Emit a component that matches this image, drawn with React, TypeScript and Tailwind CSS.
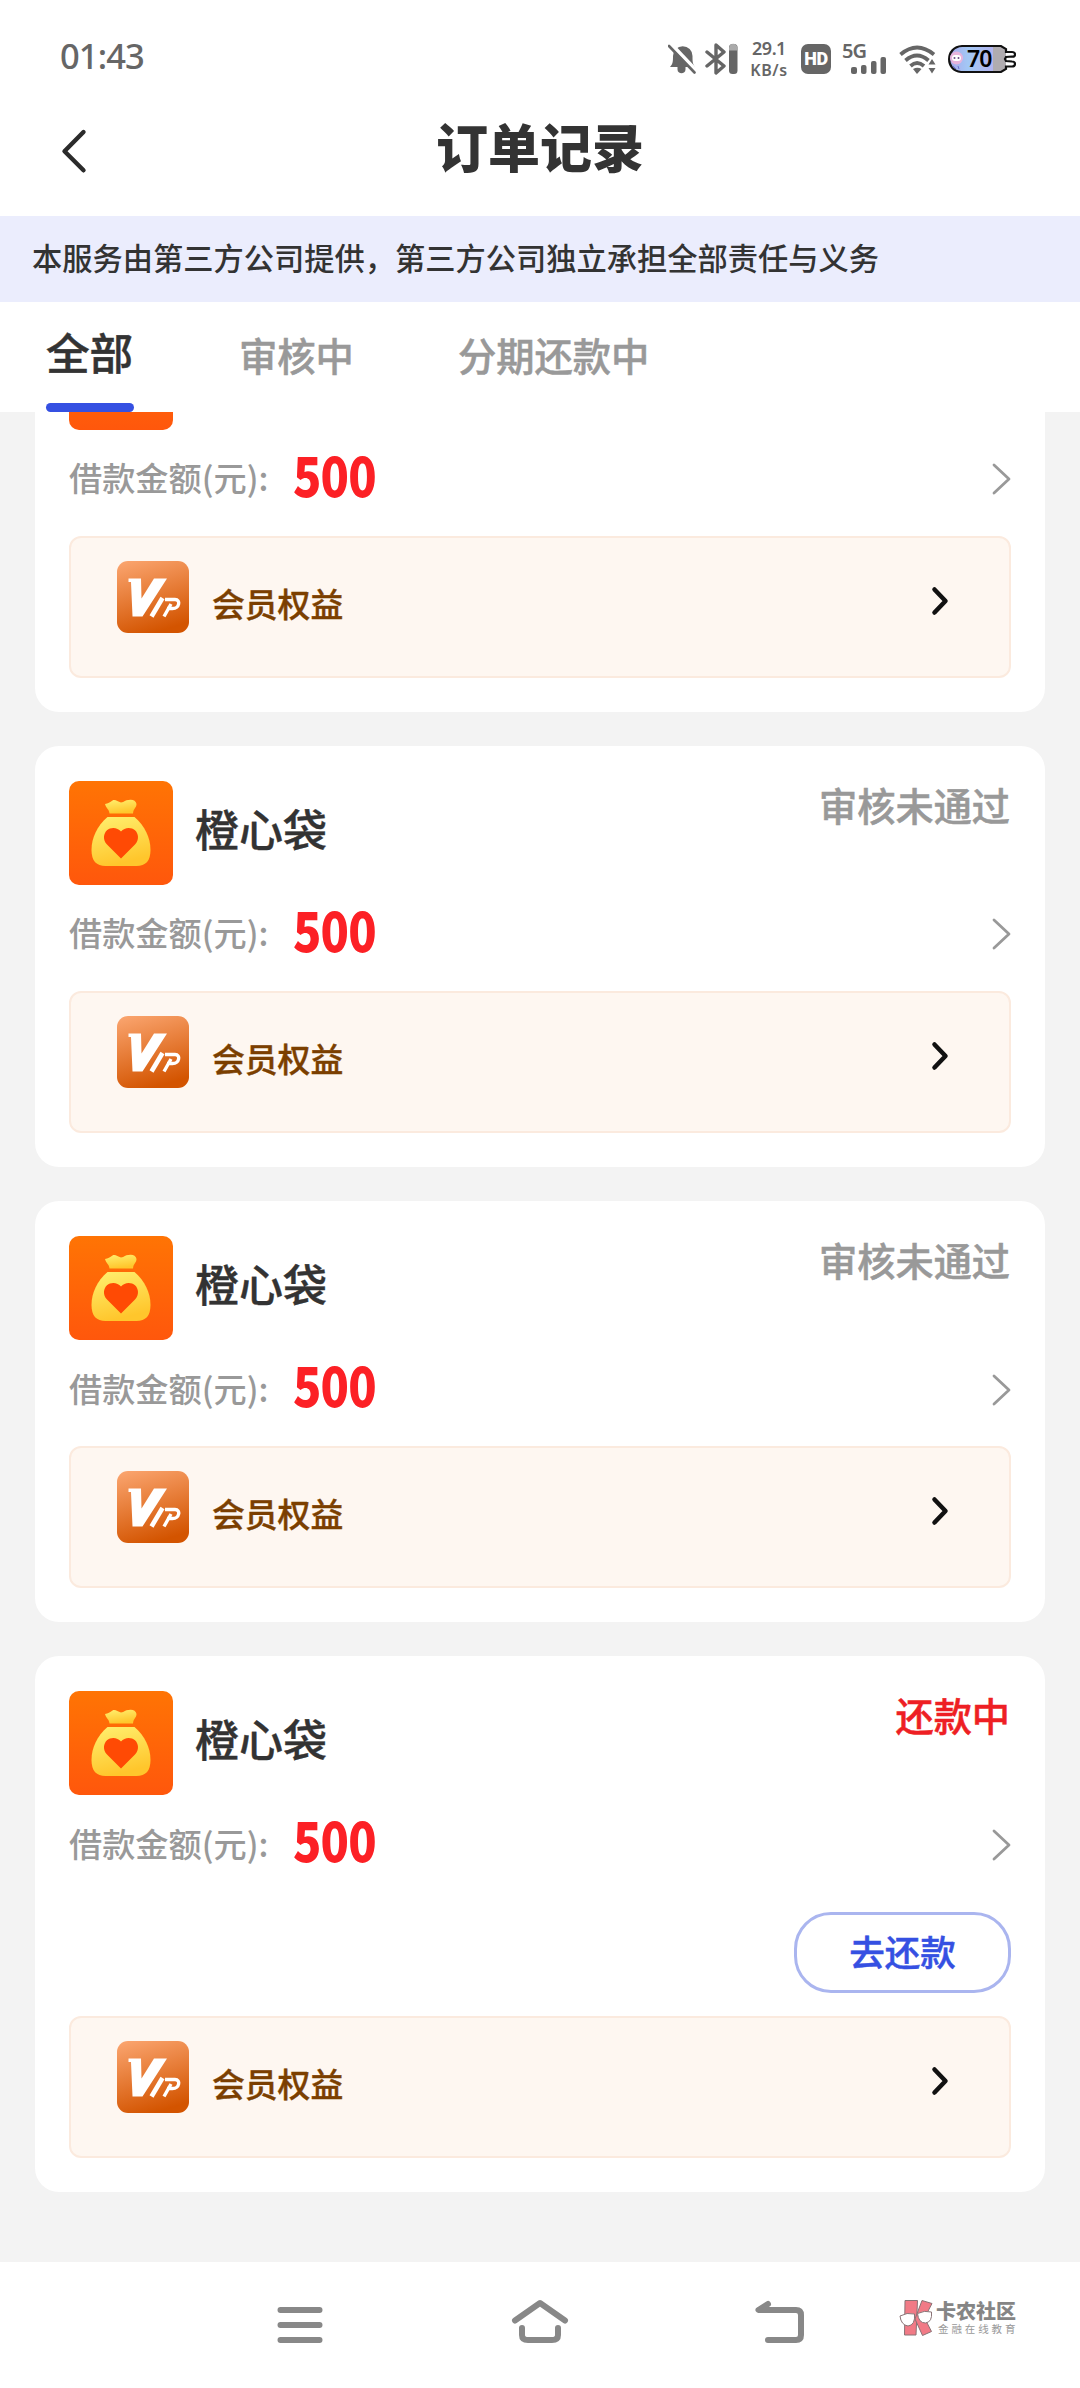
import type { ReactNode } from 'react';

type Order = {
  id: number;
  name: string;
  amount: number;
  status: string;
  repaying?: boolean;
};

const orders: Order[] = [
  { id: 1, name: '橙心袋', amount: 500, status: '审核未通过' },
  { id: 2, name: '橙心袋', amount: 500, status: '审核未通过' },
  { id: 3, name: '橙心袋', amount: 500, status: '审核未通过' },
  { id: 4, name: '橙心袋', amount: 500, status: '还款中', repaying: true },
];

function StatusBar() {
  return (
    <div className="flex h-[84px] items-start pl-[60px] text-[#666]">
      <div className="mt-[35px] w-[608px] font-['Noto_Sans'] text-[34.5px] leading-[42px] font-medium tracking-[-0.9px]">
        01:43
      </div>

      <svg className="mt-[43px]" width="28" height="32" viewBox="0 0 28 32" fill="none">
        <path
          d="M2 24C5 21 5 18 5 13a9.600 9.600 0 0 1 19.500 0c0 5 0 8 2.500 11h-9.500v2.500c0 5-8 5-8 0V24z"
          fill="#666"
        />
        <path d="M3 1L29 28.500" stroke="#fff" strokeWidth="4" />
        <path d="M1 3l25.500 26.500" stroke="#666" strokeWidth="2.600" strokeLinecap="round" />
      </svg>

      <svg className="mt-[43px] ml-[9px]" width="33" height="32" viewBox="0 0 33 32" fill="none">
        <path
          d="M2 9l17 14-8 7V2l8 7L2 23"
          stroke="#666"
          strokeWidth="3.400"
          strokeLinecap="round"
          strokeLinejoin="round"
        />
        <rect x="24" y="1" width="8.500" height="30" rx="3.500" fill="#666" />
        <path d="M24 7.500V5a4 4 0 0 1 8.500 0v2.500z" fill="#aaa" />
      </svg>

      <div className="mt-[39px] ml-[10px] w-[42px] text-center font-['Noto_Sans'] font-semibold">
        <div className="text-[18px] leading-[18px] tracking-[-0.5px]">29.1</div>
        <div className="mt-[4px] text-[16px] leading-[18px] font-semibold tracking-[0.6px]">KB/s</div>
      </div>

      <div className="mt-[44px] ml-[11px] flex h-[30px] w-[30px] items-center justify-center rounded-[7px] bg-[#666] font-['Roboto'] text-[18px] leading-none font-black tracking-[-0.5px] text-white">
        HD
      </div>

      <div className="mt-[42px] ml-[11px] h-[32px] w-[46px]">
        <div className="h-[15px] font-['Noto_Sans'] text-[20px] leading-[18px] font-semibold tracking-[-1px]">
          5G
        </div>
        <svg width="46" height="17" viewBox="0 0 46 17" fill="#666">
          <rect x="9" y="10" width="6" height="7" rx="2" />
          <rect x="19" y="8" width="5.500" height="9" rx="2" />
          <rect x="29" y="4" width="5.500" height="13" rx="2" />
          <rect x="38.500" y="0" width="5.500" height="17" rx="2" />
        </svg>
      </div>

      <svg className="mt-[44px] ml-[11px]" width="38" height="31" viewBox="0 0 38 31" fill="none">
        <g stroke="#666" strokeWidth="3.800">
          <path d="M1.500 10.500Q18 -3.500 35 10.500" />
          <path d="M6.500 16.500Q18 6.500 29.500 16.500" />
          <path d="M11.500 22Q18 16 25 22" />
        </g>
        <path d="M14 25q4.500-2.500 8.500 0L18 30z" fill="#666" />
        <path d="M33 15l3.500 5.500h-7zM33 29.500l-3.500-5.500h7z" fill="#666" />
      </svg>

      <div className="relative mt-[44px] ml-[10px]">
        <svg width="69" height="30" viewBox="0 0 69 30" fill="none">
          <defs>
            <linearGradient id="battery">
              <stop offset="0" stopColor="#a9a4ea" />
              <stop offset="0.450" stopColor="#a3c8f5" />
              <stop offset="1" stopColor="#b3b4ef" />
            </linearGradient>
            <clipPath id="batteryBody">
              <path d="M15 2h39l5 3v20l-5 3H14C-2 27-2 3 15 2z" />
            </clipPath>
          </defs>
          <g clipPath="url(#batteryBody)">
            <path d="M0 0h47v30H0z" fill="url(#battery)" />
            <path d="M46 0h14v30H46z" fill="#b0acb0" />
          </g>
          <path
            d="M15 2h39l5 3v3h6q3 0 3 2.500T65 12.500l-6 .5-1 2 1 2 6 .5q3 0 3 2.500T65 22.500h-6v2.500l-5 3H14C-2 27-2 3 15 2z"
            stroke="#111"
            strokeWidth="2.200"
          />
          <circle cx="9.500" cy="14" r="6.500" fill="#e7b4dd" />
          <rect x="5" y="11" width="9" height="6" rx="3" fill="#fff" />
          <circle cx="7.500" cy="14" r="1" fill="#6b4a86" />
          <circle cx="11.500" cy="14" r="1" fill="#6b4a86" />
          <path d="M6 22l3 3M11 22l1 3" stroke="#6e6ed0" strokeWidth="1" />
        </svg>
        <span className="absolute top-0 left-[20px] font-['Noto_Sans'] text-[23px] leading-[28px] font-semibold tracking-[-1px] text-black">
          70
        </span>
      </div>
    </div>
  );
}

function Header() {
  return (
    <div className="flex h-[132px] items-start">
      <svg className="mt-[44px] ml-[60px]" width="28" height="46" viewBox="0 0 28 46" fill="none">
        <path
          d="M23.500 4L4.500 23.300l19 19"
          stroke="#2b2b2b"
          strokeWidth="4.400"
          strokeLinecap="round"
          strokeLinejoin="round"
        />
      </svg>
      <h1 className="mt-[28px] flex-1 pr-[88px] text-center text-[52px] leading-[68px] font-black text-[#333]">
        订单记录
      </h1>
    </div>
  );
}

function Tabs() {
  return (
    <div className="flex h-[110px] pl-[46px] text-[38.3px] leading-[58px] font-medium text-[#999] [-webkit-text-stroke:0.5px]">
      <div className="w-[88px] pt-[16px] text-[43.6px] text-[#333]">
        <div className="leading-[66px]">全部</div>
        <div className="mt-[19px] h-[9px] rounded-[4.5px] bg-[#3550e2]" />
      </div>
      <span className="mt-[24px] ml-[105px]">审核中</span>
      <span className="mt-[24px] ml-[104px]">分期还款中</span>
    </div>
  );
}

function BagLogo() {
  return (
    <svg className="shrink-0" width="104" height="104" viewBox="0 0 104 104">
      <defs>
        <linearGradient id="logoBg" x1="0" y1="0" x2="0" y2="1">
          <stop offset="0" stopColor="#ff7404" />
          <stop offset="1" stopColor="#ff570c" />
        </linearGradient>
        <linearGradient id="bag" x1="0" y1="0" x2="0.300" y2="1">
          <stop offset="0" stopColor="#fff070" />
          <stop offset="1" stopColor="#ffc62c" />
        </linearGradient>
      </defs>
      <rect width="104" height="104" rx="10" fill="url(#logoBg)" />
      <path
        d="M36 23c3-.5 5-1.500 7.500-3.500 3-1.500 5 1.500 8.500 2 3.500-.5 5-3 8-2.500 3-1 7 .5 7.500 4 0 4-3 4-3.500 9.500H40.500C40 28 37.500 28 36 23z"
        fill="url(#bag)"
      />
      <path
        d="M38.500 36h27C76 45 81.500 57 81.500 69c0 11-5 16-14 16h-31c-9 0-14-5-14-16 0-12 5.500-24 16-33z"
        fill="url(#bag)"
      />
      <path
        d="M52 77.500L38 63.500c-4.500-5-3.500-11 0-14.300 4-3.500 10.500-3 14 1.300 3.500-4.300 10-4.800 14-1.300 3.500 3.300 4.500 9.300 0 14.300z"
        fill="#ff4a04"
      />
    </svg>
  );
}

function VipBadge() {
  return (
    <svg width="72" height="72" viewBox="0 0 72 72">
      <defs>
        <linearGradient id="vip" x1="0.200" y1="0" x2="0.500" y2="1">
          <stop offset="0" stopColor="#f9a26b" />
          <stop offset="1" stopColor="#d35400" />
        </linearGradient>
      </defs>
      <rect width="72" height="72" rx="11" fill="url(#vip)" />
      {/* stylised mark, slanted strokes with a notch on the left */}
      <path d="M11.500 17.500H24l.5 20 12.500-20h13L25.500 55.500H15.500L14 21h-2.500z" fill="#fff" />
      <g fill="none" stroke="#fff" strokeWidth="3.400">
        <path d="M45.500 37L34.500 55.500" strokeWidth="4.600" />
        <path d="M48 38.500h10c6 0 4.500 9-2.500 9H50M54 43l-7 12.500" />
      </g>
    </svg>
  );
}

function Benefits() {
  return (
    <div className="flex h-[142px] items-start rounded-[12px] border-2 border-[#fbeade] bg-[#fef7f1] pt-[23px] pr-[59px] pl-[46px]">
      <VipBadge />
      <span className="mt-[18px] ml-[23px] text-[32.8px] leading-[48px] font-medium text-[#7b3f00] [-webkit-text-stroke:0.4px]">
        会员权益
      </span>
      <svg className="mt-[24px] ml-auto" width="20" height="32" viewBox="0 0 20 32" fill="none">
        <path
          d="M4.500 4.500L15.500 16 4.500 27.500"
          stroke="#111"
          strokeWidth="4.500"
          strokeLinecap="round"
          strokeLinejoin="round"
        />
      </svg>
    </div>
  );
}

function OrderCard({ order }: { order: Order }) {
  return (
    <section className="rounded-[24px] bg-white px-[34px] pt-[35px] pb-[34px]">
      <div className="flex h-[104px] items-start">
        <BagLogo />
        <h2 className="mt-[15px] ml-[22px] text-[44px] leading-[64px] font-medium text-[#333] [-webkit-text-stroke:0.4px]">
          {order.name}
        </h2>
        <span
          className={`-mt-[2px] ml-auto pr-[1px] text-[38.2px] leading-[52px] font-medium [-webkit-text-stroke:0.5px] ${
            order.repaying ? 'text-[#ee1f24]' : 'text-[#999]'
          }`}
        >
          {order.status}
        </span>
      </div>

      <div className="flex h-[106px] items-center pb-[11px]">
        <span className="w-[224px] text-[33.2px] font-medium whitespace-nowrap text-[#999]">
          借款金额(元):
        </span>
        <span className="-mt-[9px] origin-left scale-x-[0.85] text-[55px] leading-[60px] font-black tracking-[-1px] text-[#fc2025]">
          {order.amount}
        </span>
        <svg className="mt-[4px] ml-auto" width="20" height="34" viewBox="0 0 20 34" fill="none">
          <path
            d="M3 3l15 14L3 31"
            stroke="#999"
            strokeWidth="2.800"
            strokeLinecap="round"
            strokeLinejoin="round"
          />
        </svg>
      </div>

      {order.repaying ? (
        <div className="flex justify-end pt-[11px] pb-[23px]">
          <button className="h-[81px] w-[217px] rounded-[37px] border-[3px] border-[#aab5ef] pb-[5px] text-[35.5px] leading-none font-medium text-[#3550e2] [-webkit-text-stroke:0.5px]">
            去还款
          </button>
        </div>
      ) : null}

      <Benefits />
    </section>
  );
}

function NavIcon({ children }: { children: ReactNode }) {
  return (
    <svg
      width="60"
      height="50"
      viewBox="0 0 60 50"
      fill="none"
      stroke="#888"
      strokeWidth="6"
      strokeLinecap="round"
      strokeLinejoin="round"
    >
      {children}
    </svg>
  );
}

function Watermark() {
  return (
    <div className="flex items-start">
      <svg width="35" height="38" viewBox="0 0 35 38" stroke="#8a7376" strokeWidth="1">
        <path d="M6 1.500h12.500L17 36H5.500z" fill="#f17a86" />
        <path d="M23 1.500l10 3L25.500 19l7 13.500-9 4L16 20z" fill="#f17a86" />
        <path
          d="M1 17q7-4 14.500-2 1 11-6.500 12-7-1-8-10zM18.500 14.500q7-3.500 14-1.500 1 10-6 11-7 0-8-9.500z"
          fill="#fff"
        />
      </svg>
      <div className="ml-[2px] whitespace-nowrap">
        <div className="text-[20px] leading-[24px] font-black text-[#858585]">卡农社区</div>
        <div className="ml-[2px] text-[10.5px] leading-[12px] tracking-[2.900px] text-[#999]">
          金融在线教育
        </div>
      </div>
    </div>
  );
}

function SystemNav() {
  return (
    <nav className="flex h-[126px] items-start bg-white pt-[36px] pl-[270px]">
      <NavIcon>
        <path d="M10.500 12h39M10.500 27h39M10.500 42h39" />
      </NavIcon>
      <div className="ml-[180px]">
        <NavIcon>
          <path d="M5 22.500L30 5l25 17.500" />
          <path d="M12 30v7q0 5 6 5h24q6 0 6-5v-7" />
        </NavIcon>
      </div>
      <div className="ml-[180px]">
        <NavIcon>
          <path d="M18 6L8.500 12H46q5 0 5 5v20q0 5-5 5H18" />
        </NavIcon>
      </div>
      <div className="mt-[1px] ml-[89px]">
        <Watermark />
      </div>
    </nav>
  );
}

export default function App() {
  return (
    <div className="flex h-[2388px] w-[1080px] flex-col overflow-hidden bg-white font-['Noto_Sans_CJK_SC',sans-serif]">
      <StatusBar />
      <Header />
      <div className="h-[86px] bg-[#ebedfd] pt-[18px] pl-[32px] text-[30.25px] leading-[46px] font-medium whitespace-nowrap text-[#333]">
        本服务由第三方公司提供，第三方公司独立承担全部责任与义务
      </div>
      <Tabs />
      {/* list is scrolled, the first card sits partly above the fold */}
      <main className="h-[1850px] overflow-hidden bg-[#f3f3f3] px-[35px]">
        <div className="-mt-[121.5px] flex flex-col gap-[34.3px]">
          {orders.map((order) => (
            <OrderCard key={order.id} order={order} />
          ))}
        </div>
      </main>
      <SystemNav />
    </div>
  );
}
